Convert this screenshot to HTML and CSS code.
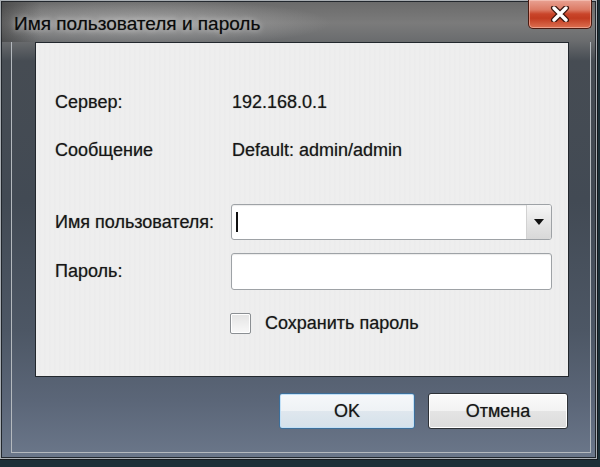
FILE: index.html
```html
<!DOCTYPE html>
<html lang="ru">
<head>
  <meta charset="UTF-8">
  <title>Имя пользователя и пароль</title>
  <link rel="stylesheet" href="styles.css">
</head>
<body>

<div class="window">
  <div class="titlebar">
    <span class="title">Имя пользователя и пароль</span>
    <button class="close" type="button">
      <svg width="20" height="16" viewBox="0 0 20 16">
        <path d="M4 2 L16 14 M16 2 L4 14" stroke="#3b1710" stroke-width="6" stroke-linecap="round"/>
        <path d="M4 2 L16 14 M16 2 L4 14" stroke="#ffffff" stroke-width="3.4" stroke-linecap="round"/>
      </svg>
    </button>
  </div>

  <div class="client">
    <div class="panel">
      <div class="info">
        <span class="label">Сервер:</span>
        <span class="value">192.168.0.1</span>
        <span class="label">Сообщение</span>
        <span class="value">Default: admin/admin</span>
      </div>

      <div class="fields">
        <label class="label" for="user">Имя пользователя:</label>
        <div class="combo" id="user">
          <span class="caret"></span>
          <span class="drop">
            <svg width="10" height="6" viewBox="0 0 10 6"><path d="M0 0 H10 L5 6 Z" fill="#111"/></svg>
          </span>
        </div>
        <label class="label" for="pass">Пароль:</label>
        <div class="textbox" id="pass"></div>
      </div>

      <label class="remember"><span class="check"></span>Сохранить пароль</label>
    </div>

    <div class="buttons">
      <button class="btn btn-default" type="button">OK</button>
      <button class="btn btn-cancel" type="button">Отмена</button>
    </div>
  </div>
</div>

</body>
</html>
```

FILE: styles.css
```css
body {
  margin: 0;
  background: #1c3038;
  font-family: 'Liberation Sans', Arial, sans-serif;
  color: #161616;
  height: 467px;
  overflow: hidden;
}

.window {
  width: 595px;
  height: 457px;
  border: 1px solid #a9aeb3;
  box-shadow: inset 0 0 0 1px #22272d, 0 0 0 1px #15191d;
  background: linear-gradient(to bottom, #6a6a6a 0, #7b7b7b 22px, #6a6c6e 40px, #464c53 60px, #424a54 200px, #4d5765 330px, #5b6678 400px, #6b778a 100%);
  display: flex;
  flex-direction: column;
}

/* title bar */
.titlebar {
  height: 41px;
  flex-shrink: 0;
  display: flex;
  justify-content: space-between;
  align-items: flex-start;
  background:
    linear-gradient(to right, rgba(40, 40, 40, 0.45), rgba(40, 40, 40, 0) 40px),
    radial-gradient(ellipse 190px 24px at 140px 22px, rgba(200, 200, 200, 0.55), rgba(200, 200, 200, 0) 100%);
}

.title {
  margin: 12px 0 0 13px;
  font-size: 19px;
  color: #0a0a0a;
  text-shadow: 0 0 6px rgba(255, 255, 255, 0.7), 0 0 1px rgba(0, 0, 0, 0.6);
}

.close {
  width: 64px;
  height: 29px;
  margin: -1px 4px 0 0;
  padding: 0;
  border: 1px solid #4b1a10;
  border-top: none;
  border-radius: 0 0 5px 5px;
  background: linear-gradient(to bottom, #e9a293 0, #dc7a64 35%, #c9452a 50%, #c23b20 65%, #dd7051 100%);
  box-shadow: inset 0 0 0 1px rgba(255, 220, 210, 0.45);
  display: flex;
  align-items: center;
  justify-content: center;
}

/* client area */
.client {
  flex: 1;
  margin: 0 5px 5px 10px;
  border: 1px solid #b4b9be;
  border-top: none;
  padding: 0 21px 0 23px;
  display: flex;
  flex-direction: column;
}

.panel {
  height: 298px;
  flex-shrink: 0;
  border: 1px solid #22272d;
  background: repeating-linear-gradient(90deg, #eeeeee 0, #eeeeee 3px, #e9e9ea 4px, #f0f0f0 5px);
  padding: 35px 0 0 19px;
}

.label,
.value,
.remember {
  font-size: 18px;
  text-shadow: 0 0 1px rgba(0, 0, 0, 0.45);
}

.info {
  display: grid;
  grid-template-columns: 177px 1fr;
  grid-auto-rows: 48px;
  align-items: center;
}

.fields {
  margin-top: 30px;
  display: grid;
  grid-template-columns: 176px 321px;
  row-gap: 13px;
  align-items: center;
}

.combo,
.textbox {
  height: 34px;
  border: 1px solid #9ea2a6;
  border-radius: 3px;
  background: #fff;
  box-shadow: inset 0 1px 1px rgba(0, 0, 0, 0.08);
}

.textbox {
  height: 35px;
}

.combo {
  display: flex;
  align-items: center;
  justify-content: space-between;
}

.caret {
  width: 2px;
  height: 20px;
  margin-left: 4px;
  background: #111;
}

.drop {
  width: 24px;
  height: 100%;
  border-left: 1px solid #d2d2d2;
  border-radius: 0 2px 2px 0;
  background: linear-gradient(to bottom, #f6f6f6, #e6e6e6 50%, #d8d8d8);
  display: flex;
  align-items: center;
  justify-content: center;
}

.remember {
  margin: 23px 0 0 175px;
  display: flex;
  align-items: center;
  gap: 14px;
}

.check {
  width: 19px;
  height: 19px;
  border: 1px solid #8b8f93;
  border-radius: 2px;
  background: linear-gradient(to bottom, #e4e4e4, #f8f8f8);
  box-shadow: inset 0 0 0 1px #fff;
}

/* buttons */
.buttons {
  margin-top: 16px;
  display: flex;
  justify-content: flex-end;
  gap: 13px;
  padding-right: 1px;
}

.btn {
  height: 36px;
  font-family: 'Liberation Sans', Arial, sans-serif;
  font-size: 18px;
  color: #161616;
  text-shadow: 0 0 1px rgba(0, 0, 0, 0.45);
  border-radius: 3px;
  padding: 0;
}

.btn-default {
  width: 136px;
  border: 1px solid #3d6f9a;
  background: linear-gradient(to bottom, #f6f8fa 0, #eef2f5 50%, #dfe7ee 51%, #d5e1ea 100%);
  box-shadow: inset 0 0 0 1px #c2e0f6;
}

.btn-cancel {
  width: 140px;
  border: 1px solid #2d3136;
  background: linear-gradient(to bottom, #fbfbfb 0, #f2f2f2 50%, #e4e4e4 51%, #dcdcdc 100%);
  box-shadow: inset 0 0 0 1px #fff;
}
```
